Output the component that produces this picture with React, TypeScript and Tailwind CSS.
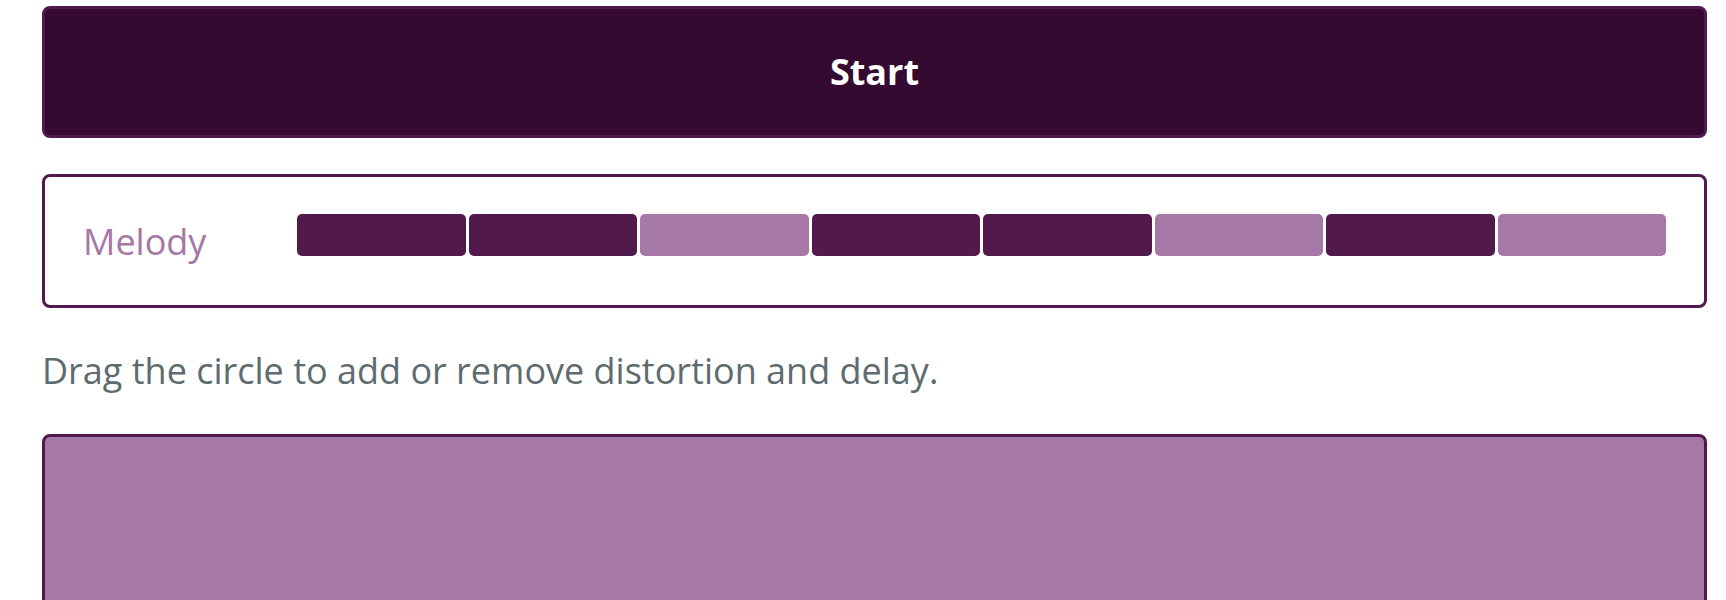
import React from "react";

const pattern = [true, true, false, true, true, false, true, false];

export default function App() {
  return (
    <div
      className="w-[1726px] h-[600px] overflow-hidden bg-white"
      style={{ fontFamily: '"Open Sans", "Noto Sans", sans-serif' }}
    >
      <div className="ml-[42px] w-[1665px] pt-[6px] flex flex-col">
        <button className="h-[132px] w-full rounded-[8px] border-[3px] border-[#52194d] bg-[#350a30] text-white text-[36px] font-bold flex items-center justify-center">
          Start
        </button>

        <div className="mt-[36px] h-[134px] rounded-[8px] border-[3px] border-[#52194d] bg-white px-[38px] pt-[37px] flex items-start">
          <div className="w-[214px] shrink-0 text-[36px] leading-[54px] text-[#a678a5] mt-[1px]">
            Melody
          </div>
          <div className="flex-1 flex gap-[3px]">
            {pattern.map((on, i) => (
              <div
                key={i}
                className={
                  "flex-1 h-[42px] rounded-[5px] " +
                  (on ? "bg-[#52194d]" : "bg-[#a678a5]")
                }
              />
            ))}
          </div>
        </div>

        <p className="mt-[36px] text-[36px] leading-[54px] text-[#5e6b6f]">
          Drag the circle to add or remove distortion and delay.
        </p>

        <div className="mt-[36px] h-[300px] rounded-[8px] border-[3px] border-[#52194d] bg-[#a678a5]" />
      </div>
    </div>
  );
}
